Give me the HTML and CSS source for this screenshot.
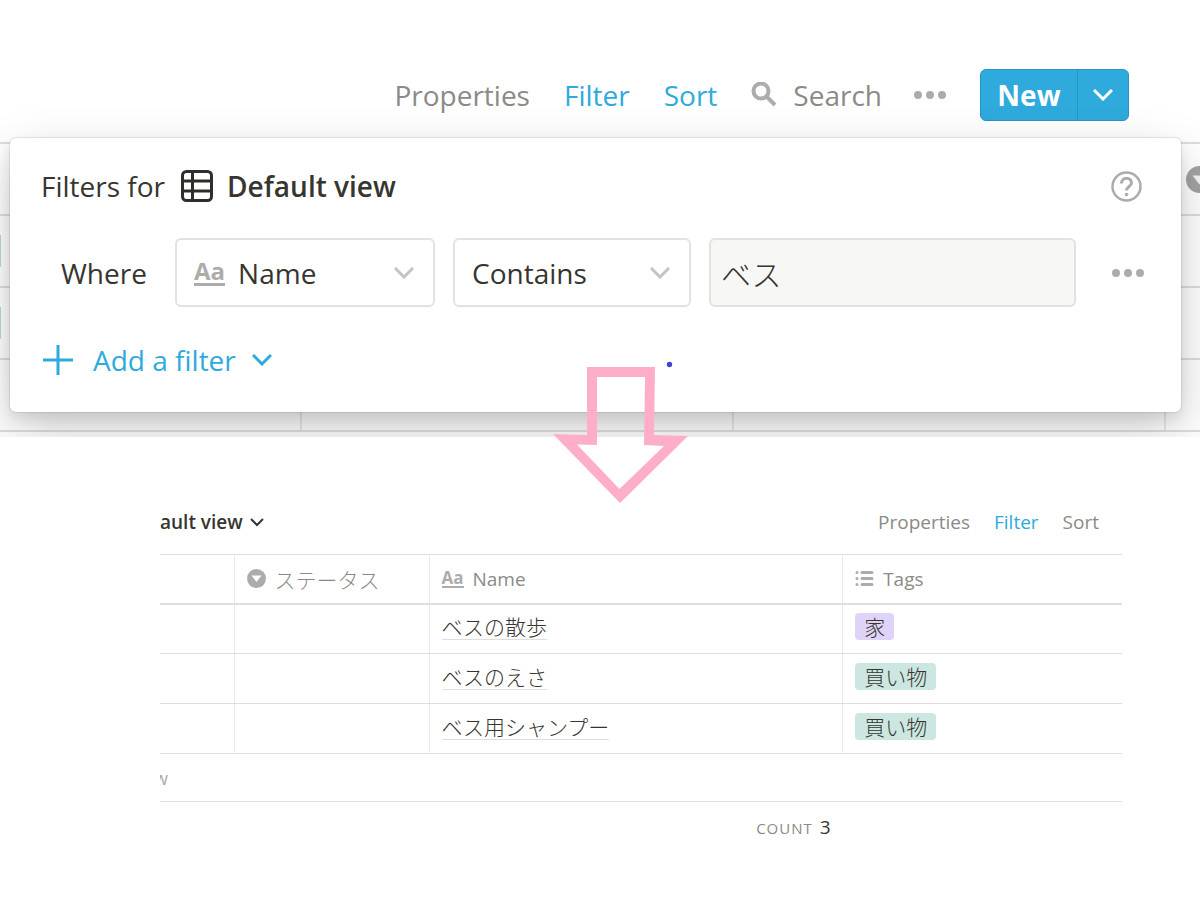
FILE: index.html
```html
<!DOCTYPE html>
<html lang="ja">
<head>
    <meta charset="UTF-8">
    <meta name="viewport" content="width=device-width, initial-scale=1.0">
    <title>Filter</title>
    <link rel="stylesheet" href="styles.css">
</head>
<body>
    <main class="page">
        <section class="top">
            <nav class="toolbar">
                <button class="link">Properties</button>
                <button class="link active">Filter</button>
                <button class="link active">Sort</button>
                <button class="link search">
                    <svg width="26" height="26" viewBox="0 0 26 26"><circle cx="10" cy="9" r="7.500" fill="none" stroke="#acacaa" stroke-width="4"/><path d="M15 14L24 23" stroke="#acacaa" stroke-width="4"/></svg>
                    Search
                </button>
                <button class="icon-button" aria-label="More">
                    <svg width="32" height="8" viewBox="0 0 32 8" fill="#acacaa"><circle cx="4" cy="4" r="4"/><circle cx="16" cy="4" r="4"/><circle cx="28" cy="4" r="4"/></svg>
                </button>
                <div class="new">
                    <button class="new-main">New</button>
                    <button class="new-more" aria-label="New options">
                        <svg width="20" height="12" viewBox="0 0 20 12"><path d="M1 1L10 10L19 1" fill="none" stroke="#fff" stroke-width="3"/></svg>
                    </button>
                </div>
            </nav>

            <table class="backdrop">
                <colgroup><col class="w-first"><col class="w-mid"><col class="w-mid"><col></colgroup>
                <tr><td></td><td></td><td></td><td class="status"><svg width="27" height="27" viewBox="0 0 27 27"><circle cx="13.500" cy="13.500" r="13.500" fill="#a3a3a1"/><path d="M6.500 9.500H20.500L13.500 18.500Z" fill="#f4f4f4"/></svg></td></tr>
                <tr><td><span class="chip"></span></td><td></td><td></td><td></td></tr>
                <tr><td><span class="chip"></span></td><td></td><td></td><td></td></tr>
                <tr><td></td><td></td><td></td><td></td></tr>
            </table>

            <form class="panel" onsubmit="return false">
                <div class="panel-title">
                    <span>Filters for</span>
                    <svg class="table-icon" width="32" height="32" viewBox="0 0 32 32" fill="none" stroke="#2f2e2a" stroke-width="3"><rect x="1.500" y="1.500" width="29" height="29" rx="4"/><path d="M11.500 2V30M2 11H30M2 21H30"/></svg>
                    <strong>Default view</strong>
                    <button class="icon-button help" aria-label="Help">
                        <svg width="31" height="31" viewBox="0 0 31 31" fill="none" stroke="#acacaa"><circle cx="15.500" cy="15.500" r="14" stroke-width="2.500"/><path d="M10.500 12.500C10.500 5.500 20.500 5.500 20.500 12C20.500 15.500 15.500 15.500 15.500 19.500" stroke-width="3"/><circle cx="15.500" cy="23.500" r="1.800" fill="#acacaa" stroke="none"/></svg>
                    </button>
                </div>
                <div class="rule">
                    <span class="where">Where</span>
                    <div class="field field-name">
                        <span class="aa">Aa</span>
                        <select aria-label="Property"><option>Name</option></select>
                        <svg width="20" height="12" viewBox="0 0 20 12"><path d="M1 1L10 10L19 1" fill="none" stroke="#c4c4c2" stroke-width="3"/></svg>
                    </div>
                    <div class="field field-op">
                        <select aria-label="Condition"><option>Contains</option></select>
                        <svg width="20" height="12" viewBox="0 0 20 12"><path d="M1 1L10 10L19 1" fill="none" stroke="#c4c4c2" stroke-width="3"/></svg>
                    </div>
                    <input class="value" type="text" value="ベス" aria-label="Value">
                    <button class="icon-button rule-more" aria-label="Filter options">
                        <svg width="32" height="8" viewBox="0 0 32 8" fill="#acacaa"><circle cx="4" cy="4" r="4"/><circle cx="16" cy="4" r="4"/><circle cx="28" cy="4" r="4"/></svg>
                    </button>
                </div>
                <button class="add">
                    <svg width="30" height="30" viewBox="0 0 30 30"><path d="M15 0V30M0 15H30" stroke="#2eaadc" stroke-width="3"/></svg>
                    <span>Add a filter</span>
                    <svg width="20" height="12" viewBox="0 0 20 12"><path d="M1 1L10 10L19 1" fill="none" stroke="#2eaadc" stroke-width="3"/></svg>
                </button>
            </form>
        </section>

        <svg class="arrow" width="136" height="144" viewBox="0 0 136 144">
            <path fill="#ffaec9" fill-rule="evenodd" d="M34 8H102L101 76L135 77L67 144L0 75L34 76ZM44 18V86L24 85.500L66.500 130L111 87L91 86L92 18Z"/>
            <circle cx="116.500" cy="5.500" r="2.700" fill="#3f48cc"/>
        </svg>

        <section class="result">
            <header class="result-bar">
                <button class="view">
                    ault view
                    <svg width="14" height="9" viewBox="0 0 14 9"><path d="M1 1L7 7L13 1" fill="none" stroke="#37352f" stroke-width="2"/></svg>
                </button>
                <nav class="result-nav">
                    <button class="link">Properties</button>
                    <button class="link active">Filter</button>
                    <button class="link">Sort</button>
                </nav>
            </header>
            <table class="grid">
                <colgroup><col class="c-first"><col class="c-status"><col class="c-name"><col class="c-tags"></colgroup>
                <thead>
                    <tr>
                        <th></th>
                        <th>
                            <div class="head">
                                <svg width="19" height="19" viewBox="0 0 19 19"><circle cx="9.500" cy="9.500" r="9.500" fill="#acacaa"/><path d="M4.500 6.500H14.500L9.500 13Z" fill="#fff"/></svg>
                                <span class="jp">ステータス</span>
                            </div>
                        </th>
                        <th><div class="head"><span class="aa">Aa</span><span>Name</span></div></th>
                        <th>
                            <div class="head">
                                <svg width="19" height="17" viewBox="0 0 19 17" stroke="#acacaa" stroke-width="3" stroke-linecap="round"><path d="M2 2.500H2.010M2 8.500H2.010M2 14.500H2.010M7 2.500H17M7 8.500H17M7 14.500H17"/></svg>
                                <span>Tags</span>
                            </div>
                        </th>
                    </tr>
                </thead>
                <tbody>
                    <tr><td></td><td></td><td><a class="title" href="#">ベスの散歩</a></td><td><span class="tag purple">家</span></td></tr>
                    <tr><td></td><td></td><td><a class="title" href="#">ベスのえさ</a></td><td><span class="tag green">買い物</span></td></tr>
                    <tr><td></td><td></td><td><a class="title" href="#">ベス用シャンプー</a></td><td><span class="tag green">買い物</span></td></tr>
                </tbody>
                <tfoot>
                    <tr class="new-row"><td colspan="4"><button class="new-page">w</button></td></tr>
                    <tr class="count-row"><td colspan="3"><span class="count-label">COUNT</span><span class="count">3</span></td><td></td></tr>
                </tfoot>
            </table>
        </section>
    </main>
</body>
</html>
```
FILE: styles.css
```css
* {
    box-sizing: border-box;
}
body {
    margin: 0;
    background: #fff;
    color: #37352f;
    font-family: "Open Sans", "Noto Sans CJK JP", sans-serif;
}
button, select, input {
    font: inherit;
    color: inherit;
    border: none;
    background: none;
    margin: 0;
    padding: 0;
}
button {
    cursor: pointer;
}
svg {
    display: block;
    flex: none;
}
table {
    width: 100%;
    border-collapse: collapse;
    table-layout: fixed;
}
td, th {
    padding: 0;
}
.page {
    position: relative;
}

/* enlarged toolbar and filter popup */
.top {
    position: relative;
    overflow: hidden;
    padding-top: 69px;
    padding-bottom: 5px;
    font-size: 28px;
}
.toolbar {
    display: flex;
    justify-content: flex-end;
    align-items: center;
    gap: 34px;
    height: 52px;
    margin: 0 71px 21px 0;
}
.link {
    color: #8b8a86;
}
.active {
    color: #2eaadc;
}
.search {
    display: flex;
    align-items: center;
    gap: 16px;
}
.toolbar .search {
    margin-right: -2px;
}
.icon-button {
    display: flex;
}
.new {
    display: flex;
    height: 52px;
    border: 1px solid #2795c1;
    border-radius: 6px;
    background: #2eaadc;
    color: #fff;
    overflow: hidden;
}
.new-main {
    width: 97px;
    font-weight: 700;
    border-right: 1px solid #2795c1;
}
.new-more {
    display: flex;
    align-items: center;
    justify-content: center;
    width: 50px;
}
.backdrop {
    border-top: 2px solid #dededd;
}
.backdrop td {
    height: 72px;
    border-bottom: 2px solid #dededd;
    border-right: 2px solid #e9e9e8;
}
.backdrop td:last-child {
    border-right: none;
}
.w-first {
    width: 301px;
}
.w-mid {
    width: 36%;
}
.status svg {
    margin-left: 20px;
}
.chip {
    display: block;
    width: 1px;
    height: 32px;
    background: #b9ddd3;
}
.panel {
    position: absolute;
    top: 138px;
    left: 10px;
    right: 19px;
    padding: 32px 32px 34px 31px;
    background: #fff;
    border-radius: 6px;
    box-shadow: 0 0 0 1px rgba(15, 15, 15, 0.08), 0 6px 13px rgba(15, 15, 15, 0.1), 0 19px 51px rgba(15, 15, 15, 0.2);
}
.panel-title {
    display: flex;
    align-items: center;
    gap: 14px;
    height: 32px;
}
.table-icon {
    margin-left: 2px;
}
.panel-title strong {
    font-weight: 600;
}
.help {
    margin-left: auto;
    margin-right: 7px;
}
.rule {
    display: flex;
    align-items: center;
    gap: 18px;
    margin: 36px 0 34px;
}
.where {
    width: 116px;
    padding-left: 20px;
}
.field {
    display: flex;
    align-items: center;
    height: 69px;
    padding: 0 19px 0 17px;
    border: 2px solid #e3e2e0;
    border-radius: 6px;
}
.field-name {
    width: 260px;
    gap: 13px;
}
.field-op {
    width: 238px;
}
.field select {
    appearance: none;
    flex: 1;
    min-width: 0;
    outline: none;
}
.aa {
    color: #acacaa;
    font-weight: 700;
    font-size: 24px;
    line-height: 24px;
    border-bottom: 3px solid #acacaa;
}
.value {
    flex: 1;
    min-width: 0;
    height: 69px;
    padding: 0 10px;
    font-size: 30px;
    font-weight: 300;
    background: #f7f7f5;
    border: 2px solid #e3e2e0;
    border-radius: 6px;
}
.rule-more {
    margin-left: 18px;
    margin-right: 5px;
}
.add {
    display: flex;
    align-items: center;
    height: 37px;
    color: #2eaadc;
    margin-left: 2px;
}
.add span {
    margin: 0 16px 0 20px;
}

/* arrow drawn over both parts */
.arrow {
    position: absolute;
    top: 359px;
    left: 553px;
}

/* filtered table */
.result {
    margin: 0 78px 0 160px;
    padding-top: 66px;
    font-size: 19px;
}
.result-bar {
    display: flex;
    justify-content: space-between;
    align-items: center;
    height: 38px;
    margin-bottom: 13px;
    padding-right: 23px;
}
.view {
    display: flex;
    align-items: center;
    gap: 7px;
    font-weight: 600;
}
.result-nav {
    display: flex;
    gap: 24px;
}
.c-first {
    width: 74px;
}
.c-status {
    width: 195px;
}
.c-name {
    width: 43%;
}
.grid {
    border-top: 1px solid #dededd;
}
.grid th, .grid tbody td {
    height: 50px;
    padding-left: 12px;
    border-right: 1px solid #e9e9e8;
    border-bottom: 1px solid #dededd;
}
.grid tbody td {
    padding-bottom: 3px;
}
.grid th {
    height: 49px;
    color: #8b8a86;
    font-weight: 400;
    border-bottom-width: 2px;
}
.grid th:last-child, .grid tbody td:last-child {
    border-right: none;
}
.head {
    display: flex;
    align-items: center;
    gap: 9px;
}
.head .aa {
    font-size: 17px;
    line-height: 16px;
    border-bottom-width: 2px;
}
.jp, .title, .tag {
    font-family: "Noto Sans CJK JP", sans-serif;
    font-size: 21px;
    font-weight: 300;
}
.title {
    display: inline-block;
    line-height: 25px;
    color: inherit;
    text-decoration: none;
    border-bottom: 1px solid #dededd;
}
.tag {
    display: inline-block;
    padding: 0 9px;
    line-height: 27px;
    border-radius: 4px;
}
.purple {
    background: #e0d3f8;
}
.green {
    background: #cce7e1;
}
.new-row td {
    height: 48px;
    border-bottom: 1px solid #dededd;
}
.new-page {
    display: flex;
    justify-content: flex-end;
    width: 8px;
    overflow: hidden;
    color: #acacaa;
    font-size: 18px;
}
.count-row td {
    height: 50px;
    padding-right: 12px;
    text-align: right;
}
.count-label {
    margin-right: 7px;
    color: #8b8a86;
    font-size: 15px;
    letter-spacing: 1px;
}
```
